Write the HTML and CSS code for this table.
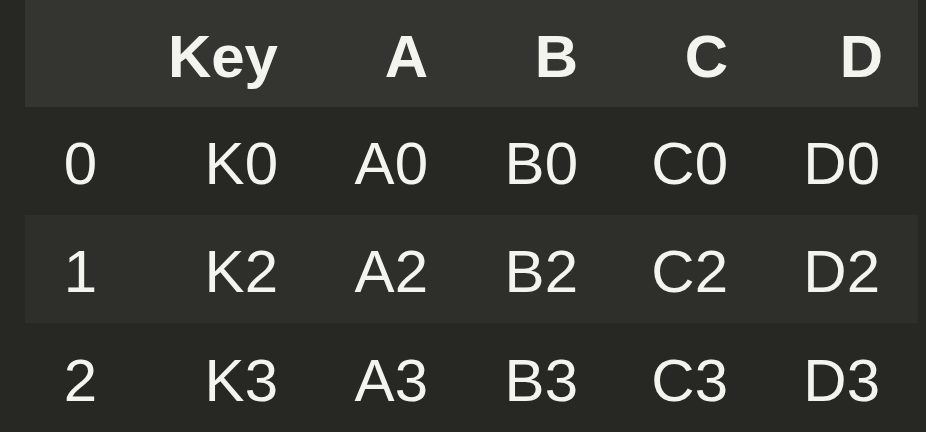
FILE: index.html
```html
<!DOCTYPE html>
<html>
<head>
<meta charset="utf-8">
<link rel="stylesheet" href="styles.css">
</head>
<body>
<div class="frame">
<table class="df">
<colgroup>
<col class="c-idx"><col class="c-key"><col class="c-val"><col class="c-val"><col class="c-val"><col class="c-last">
</colgroup>
<thead>
<tr class="head"><th></th><th>Key</th><th>A</th><th>B</th><th>C</th><th class="last">D</th></tr>
</thead>
<tbody>
<tr class="r0"><th>0</th><td>K0</td><td>A0</td><td>B0</td><td>C0</td><td class="last">D0</td></tr>
<tr class="r1"><th>1</th><td>K2</td><td>A2</td><td>B2</td><td>C2</td><td class="last">D2</td></tr>
<tr class="r2"><th>2</th><td>K3</td><td>A3</td><td>B3</td><td>C3</td><td class="last">D3</td></tr>
</tbody>
</table>
</div>
</body>
</html>
```
FILE: styles.css
```css
html, body {
  margin: 0;
  padding: 0;
  background: #272723;
  height: 100%;
  overflow: hidden;
}
.frame {
  padding-left: 25px;
}
.df {
  border-collapse: collapse;
  border-spacing: 0;
  table-layout: fixed;
  width: 893px;
  font-family: "Liberation Sans", Arial, sans-serif;
  font-size: 60px;
  color: #f4f4ee;
}
.c-idx { width: 84px; }
.c-key { width: 181px; }
.c-val { width: 150px; }
.c-last { width: 178px; }
.df th, .df td {
  text-align: right;
  padding: 6px 12px 0 0;
  height: 102px;
  line-height: 102px;
  font-weight: normal;
  white-space: nowrap;
}
.df .last { padding-right: 38px; }
.head th {
  font-weight: bold;
  background: #343430;
  height: 101px;
  padding-top: 6px;
  line-height: 96px;
}
.head th.last { padding-right: 35px; }
.r1 th, .r1 td { background: #2e2e2a; }
.r2 th, .r2 td { height: 104px; }
```
